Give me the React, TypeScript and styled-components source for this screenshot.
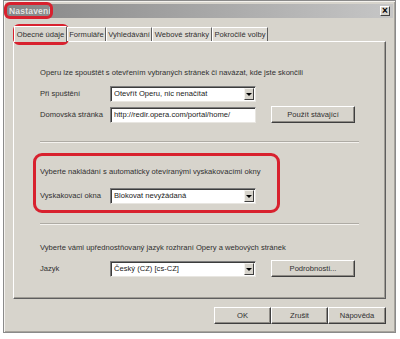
import React from 'react'
import styled, { createGlobalStyle } from 'styled-components'

const GlobalStyle = createGlobalStyle`
  html, body {
    margin: 0;
    padding: 0;
    background: #ffffff;
  }
  body {
    font-family: 'Liberation Sans', Arial, sans-serif;
    font-size: 7.6px;
    color: #303030;
  }
`

const DIALOG_BG = '#d7d4cc'
const MARK = '#d8212e'

const Page = styled.div`
  position: relative;
  width: 400px;
  height: 339px;
  padding-left: 3px;
  box-sizing: border-box;
  overflow: hidden;
`

const Dialog = styled.div`
  width: 393px;
  height: 333px;
  box-sizing: border-box;
  background: ${DIALOG_BG};
  border: 1px solid #8a8a8a;
  box-shadow: inset 1px 1px 0 #f4f2ee, inset -1px -1px 0 #a8a59e;
  display: flex;
  flex-direction: column;
`

const TitleBar = styled.div`
  height: 14px;
  margin: 3px 2px 0 2px;
  padding: 0 3px 0 3px;
  display: flex;
  align-items: center;
  justify-content: space-between;
  background: linear-gradient(to right, #868686, #a6a6a6 50%, #c6c6c6);
`

const TitleText = styled.span`
  font-weight: bold;
  font-size: 8.5px;
  color: #e4e4e4;
  letter-spacing: 0.2px;
  text-shadow: 0 0 1px #777;
`

const CloseButton = styled.div`
  width: 10px;
  height: 10px;
  box-sizing: border-box;
  background: ${DIALOG_BG};
  border: 1px solid;
  border-color: #ffffff #404040 #404040 #ffffff;
  display: flex;
  align-items: center;
  justify-content: center;
  font-size: 10px;
  font-weight: bold;
  line-height: 1;
  color: #000;
`

const TabStrip = styled.div`
  display: flex;
  align-items: flex-end;
  margin: 8px 0 0 10px;
  height: 15px;
`

const Tab = styled.div<{ $width: number; $active?: boolean }>`
  width: ${p => p.$width}px;
  height: ${p => (p.$active ? 16 : 14)}px;
  box-sizing: border-box;
  display: flex;
  align-items: center;
  justify-content: center;
  white-space: nowrap;
  background: ${p => (p.$active ? DIALOG_BG : '#dedbd4')};
  border-top: 1px solid #ffffff;
  border-left: 1px solid #ffffff;
  border-right: 1px solid #5e5e5e;
  margin-bottom: ${p => (p.$active ? -1 : 0)}px;
  position: relative;
  z-index: ${p => (p.$active ? 2 : 1)};
`

const Panel = styled.div`
  margin: 0 9px 0 9px;
  height: 258px;
  box-sizing: border-box;
  border-top: 1px solid #ffffff;
  border-left: 1px solid #ffffff;
  border-right: 1px solid #5e5e5e;
  border-bottom: 1px solid #5e5e5e;
  box-shadow: inset -1px -1px 0 #a09d96;
  padding: 0 26px;
  display: flex;
  flex-direction: column;
`

const Description = styled.div<{ $top: number }>`
  margin-top: ${p => p.$top}px;
  height: 10px;
  line-height: 10px;
  white-space: nowrap;
`

const Row = styled.div<{ $top: number }>`
  display: flex;
  align-items: center;
  margin-top: ${p => p.$top}px;
  height: 17px;
`

const Label = styled.div`
  width: 70px;
  flex-shrink: 0;
  white-space: nowrap;
`

const Field = styled.div`
  width: 146px;
  height: 16px;
  box-sizing: border-box;
  background: #ffffff;
  border: 1px solid;
  border-color: #7c7c7c #e8e6e1 #e8e6e1 #7c7c7c;
  box-shadow: inset 1px 1px 0 #3c3c3c;
  display: flex;
  align-items: center;
  padding-left: 3px;
  white-space: nowrap;
  overflow: hidden;
  color: #1a1a1a;
`

const FieldValue = styled.span`
  flex: 1;
  overflow: hidden;
`

const ArrowButton = styled.div`
  width: 10px;
  height: 12px;
  box-sizing: border-box;
  margin-left: auto;
  margin-right: 1px;
  margin-top: 1px;
  background: ${DIALOG_BG};
  border: 1px solid;
  border-color: #f4f2ee #404040 #404040 #f4f2ee;
  display: flex;
  align-items: center;
  justify-content: center;
`

const Button = styled.div<{ $width: number }>`
  width: ${p => p.$width}px;
  height: 17px;
  box-sizing: border-box;
  background: ${DIALOG_BG};
  border: 1px solid;
  border-color: #ffffff #3f3f3f #3f3f3f #ffffff;
  box-shadow: inset -1px -1px 0 #8f8c86;
  display: flex;
  align-items: center;
  justify-content: center;
  white-space: nowrap;
`

const SideButton = styled(Button)`
  margin-left: 15px;
`

const Separator = styled.div<{ $top: number }>`
  margin-top: ${p => p.$top}px;
  height: 0;
  border-top: 1px solid #aeaba4;
  border-bottom: 1px solid #f4f2ee;
`

const MarkedGroup = styled.div`
  margin: 10px 0 0 -7px;
  width: 247px;
  height: 60px;
  box-sizing: border-box;
  border: 3px solid ${MARK};
  border-radius: 9px;
  padding: 5px 0 0 4px;
  display: flex;
  flex-direction: column;
`

const Footer = styled.div`
  display: flex;
  justify-content: flex-end;
  padding: 8px 9px 0 0;
`

const Mark = styled.div<{ $x: number; $y: number; $w: number; $h: number }>`
  position: absolute;
  left: ${p => p.$x}px;
  top: ${p => p.$y}px;
  width: ${p => p.$w}px;
  height: ${p => p.$h}px;
  box-sizing: border-box;
  border: 3px solid ${MARK};
  border-radius: 6px;
  pointer-events: none;
`

const Arrow = () => (
  <svg width="6" height="3" viewBox="0 0 6 3">
    <path d="M0 0 H6 L3 3 Z" fill="#000" />
  </svg>
)

const Select: React.FC<{ value: string }> = ({ value }) => (
  <Field>
    <FieldValue>{value}</FieldValue>
    <ArrowButton>
      <Arrow />
    </ArrowButton>
  </Field>
)

const tabs = [
  { label: 'Obecné údaje', width: 53 },
  { label: 'Formuláře', width: 39 },
  { label: 'Vyhledávání', width: 46 },
  { label: 'Webové stránky', width: 60 },
  { label: 'Pokročilé volby', width: 56 },
]

export default function App() {
  return (
    <Page>
      <GlobalStyle />
      <Dialog>
        <TitleBar>
          <TitleText>Nastavení</TitleText>
          <CloseButton>×</CloseButton>
        </TitleBar>

        <TabStrip>
          {tabs.map((t, i) => (
            <Tab key={t.label} $width={t.width} $active={i === 0}>
              {t.label}
            </Tab>
          ))}
        </TabStrip>

        <Panel>
          <Description $top={26}>
            Operu lze spouštět s otevřením vybraných stránek či navázat, kde jste skončili
          </Description>
          <Row $top={7}>
            <Label>Při spuštění</Label>
            <Select value="Otevřít Operu, nic nenačítat" />
          </Row>
          <Row $top={4}>
            <Label>Domovská stránka</Label>
            <Field>
              <FieldValue>http://redir.opera.com/portal/home/</FieldValue>
            </Field>
            <SideButton $width={84}>Použít stávající</SideButton>
          </Row>

          <Separator $top={18} />

          <MarkedGroup>
            <Description $top={6}>
              Vyberte nakládání s automaticky otevíranými vyskakovacími okny
            </Description>
            <Row $top={10}>
              <Label>Vyskakovací okna</Label>
              <Select value="Blokovat nevyžádaná" />
            </Row>
          </MarkedGroup>

          <Separator $top={10} />

          <Description $top={18}>
            Vyberte vámi upřednostňovaný jazyk rozhraní Opery a webových stránek
          </Description>
          <Row $top={7}>
            <Label>Jazyk</Label>
            <Select value="Český (CZ) [cs-CZ]" />
            <SideButton $width={84}>Podrobnosti...</SideButton>
          </Row>
        </Panel>

        <Footer>
          <Button $width={57}>OK</Button>
          <Button $width={57}>Zrušit</Button>
          <Button $width={58}>Nápověda</Button>
        </Footer>
      </Dialog>

      <Mark $x={4} $y={2} $w={49} $h={17} />
      <Mark $x={13} $y={24} $w={56} $h={21} />
    </Page>
  )
}
